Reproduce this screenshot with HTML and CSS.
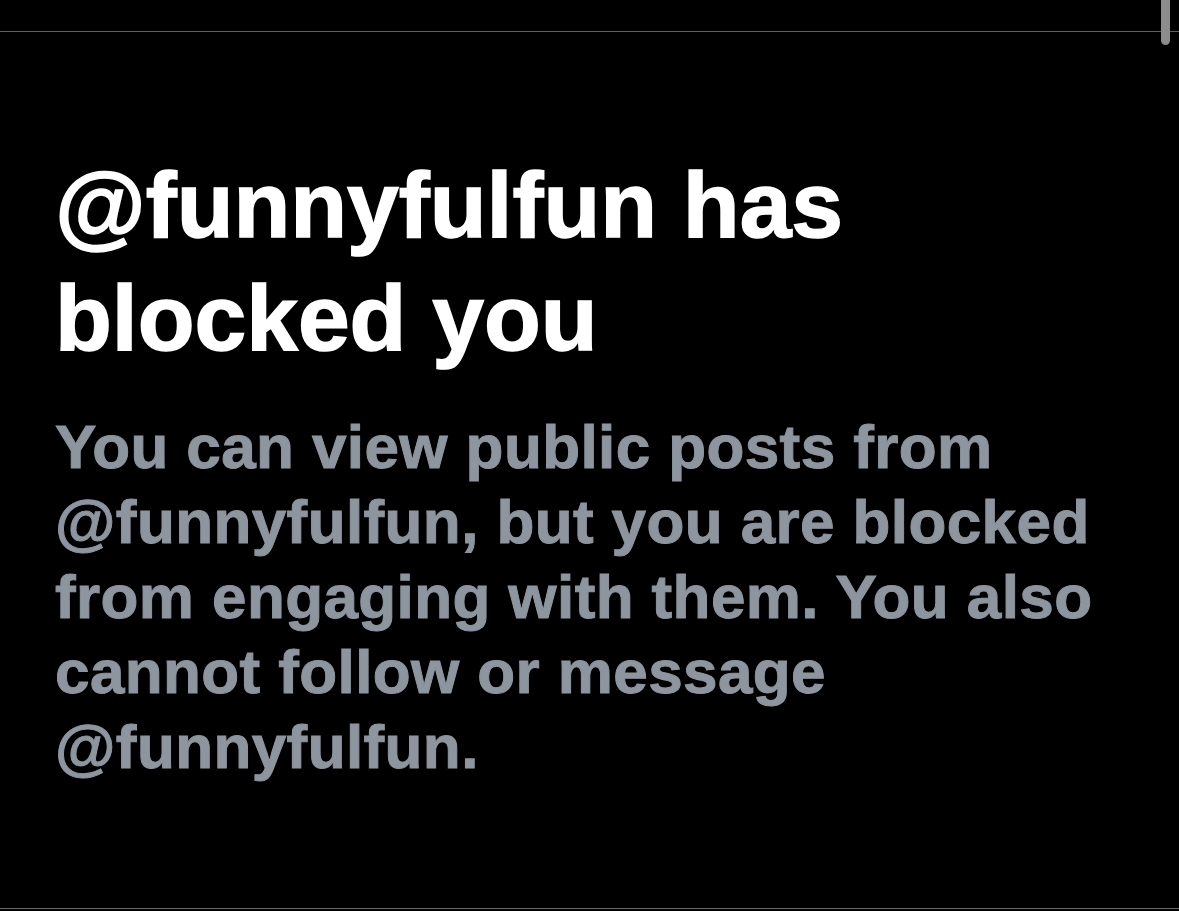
FILE: index.html
```html
<!DOCTYPE html>
<html lang="en">
<head>
<meta charset="utf-8">
<title>Blocked</title>
<link rel="stylesheet" href="styles.css">
</head>
<body>
<div class="page">
  <div class="rule rule-top"></div>
  <main class="content">
    <h1 class="title">@funnyfulfun has blocked you</h1>
    <p class="desc">You can view public posts from @funnyfulfun, but you are blocked from engaging with them. You also cannot follow or message @funnyfulfun.</p>
  </main>
  <div class="rule rule-bottom"></div>
  <div class="scrollbar"></div>
</div>
</body>
</html>
```
FILE: styles.css
```css
html, body {
  margin: 0;
  padding: 0;
  background: #000;
}
body {
  font-family: "Liberation Sans", Arial, sans-serif;
  width: 1179px;
  height: 911px;
  overflow: hidden;
}
.page {
  position: relative;
  height: 911px;
  display: flex;
  flex-direction: column;
}
.rule {
  height: 1px;
  background: #5e5e5e;
  flex: none;
}
.rule-top {
  margin-top: 31px;
}
.content {
  flex: 1;
  padding: 117px 55px 0 55px;
}
.title {
  margin: 0;
  color: #ffffff;
  font-weight: 700;
  font-size: 93px;
  line-height: 113px;
  letter-spacing: 0;
  -webkit-text-stroke: 1.5px #ffffff;
}
.desc {
  margin: 34px 0 0 0;
  color: #8d959f;
  font-weight: 700;
  font-size: 62px;
  line-height: 75px;
  letter-spacing: 0.4px;
  -webkit-text-stroke: 1px #8d959f;
}
.rule-bottom {
  margin-bottom: 2px;
  background: #6a6a6a;
}
.scrollbar {
  position: absolute;
  top: 0;
  left: 1161px;
  width: 9px;
  height: 45px;
  background: #8c8c8c;
  border-radius: 0 0 5px 5px;
}
```
